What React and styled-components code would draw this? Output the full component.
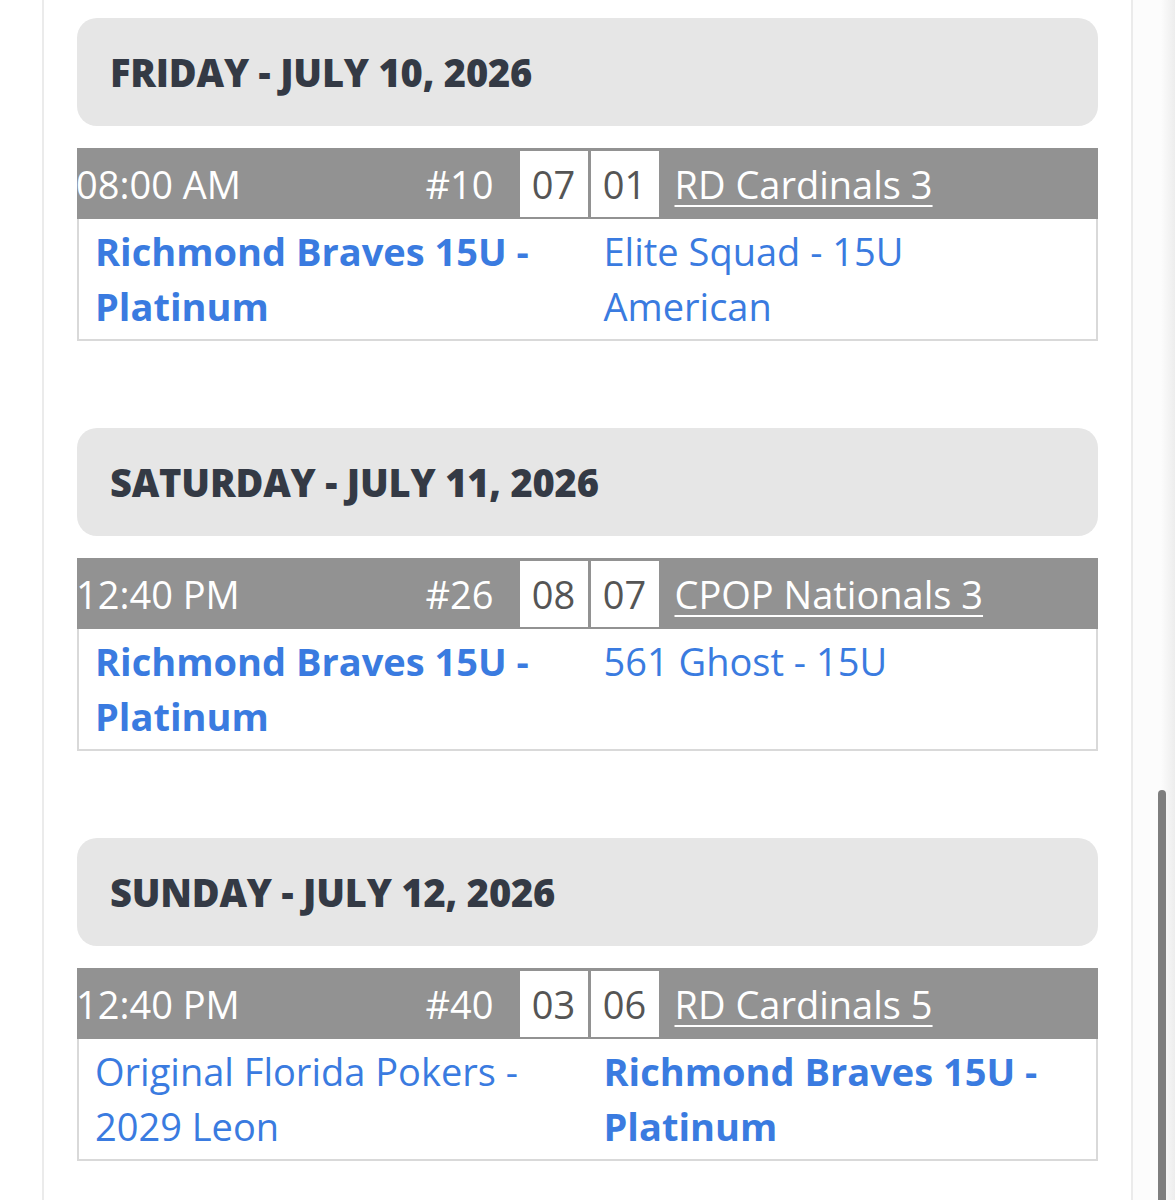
import React from 'react';
import styled, { createGlobalStyle } from 'styled-components';

const GlobalStyle = createGlobalStyle`
  html, body {
    margin: 0;
    padding: 0;
    background: #ffffff;
  }
  body {
    font-family: "Open Sans", "Liberation Sans", sans-serif;
  }
`;

const Page = styled.div`
  display: flex;
  width: 1175px;
  height: 1200px;
  overflow: hidden;
  padding-left: 42px;
  box-sizing: border-box;
`;

const Column = styled.main`
  width: 1091px;
  box-sizing: border-box;
  border-left: 2px solid #ebebeb;
  border-right: 2px solid #ebebeb;
  padding: 18px 33px 0;
  display: flex;
  flex-direction: column;
  gap: 87px;
`;

const ScrollTrack = styled.div`
  flex: 1;
  display: flex;
  justify-content: flex-end;
  padding-right: 9px;
  background: linear-gradient(to right, #fcfcfc 0, #fcfcfc 28px, #ededed 42px);
`;

const ScrollThumb = styled.div`
  width: 8px;
  margin-top: 790px;
  height: 600px;
  border-radius: 4px;
  background: #7e7e7e;
`;

const Day = styled.section`
  display: flex;
  flex-direction: column;
`;

const DayHeader = styled.h2`
  margin: 0 0 22px;
  height: 108px;
  display: flex;
  align-items: center;
  padding-left: 33px;
  border-radius: 20px;
  background: #e6e6e6;
  color: #343a45;
  font-size: 38px;
  font-weight: 800;
  letter-spacing: -0.2px;
`;

const Game = styled.div`
  display: flex;
  flex-direction: column;
`;

const GameBar = styled.div`
  height: 71px;
  display: flex;
  align-items: center;
  background: #929292;
  color: #ffffff;
  font-size: 38px;
  font-weight: 400;
`;

const GameHalf = styled.div`
  width: 50%;
  height: 100%;
  display: flex;
  align-items: center;
  box-sizing: border-box;
`;

const Time = styled.span`
  flex: 1;
  margin-left: -1px;
`;

const GameNo = styled.span`
  padding-right: 26px;
`;

const Score = styled.span`
  width: 68px;
  height: 66px;
  margin-top: 1px;
  display: flex;
  align-items: center;
  justify-content: center;
  background: #ffffff;
  color: #555555;
  margin-left: ${(p) => (p.$second ? '3px' : '0')};
`;

const Field = styled.a`
  color: #ffffff;
  text-decoration: underline;
  text-decoration-thickness: 2px;
  text-underline-offset: 6px;
  padding-left: 16px;
`;

const Teams = styled.div`
  display: grid;
  grid-template-columns: 1fr 1fr;
  border: 2px solid #d9d9d9;
  border-top: none;
  padding: 5px 0 5px;
`;

const Team = styled.a`
  padding: 0 18px 0 16px;
  color: #3a7be0;
  font-size: 38px;
  line-height: 55px;
  font-weight: ${(p) => (p.$mine ? 700 : 400)};
  text-decoration: none;
`;

const schedule = [
  {
    day: 'FRIDAY - JULY 10, 2026',
    time: '08:00 AM',
    no: '#10',
    scores: ['07', '01'],
    field: 'RD Cardinals 3',
    home: 'Richmond Braves 15U - Platinum',
    away: 'Elite Squad - 15U American',
    mine: 'home',
  },
  {
    day: 'SATURDAY - JULY 11, 2026',
    time: '12:40 PM',
    no: '#26',
    scores: ['08', '07'],
    field: 'CPOP Nationals 3',
    home: 'Richmond Braves 15U - Platinum',
    away: '561 Ghost - 15U',
    mine: 'home',
  },
  {
    day: 'SUNDAY - JULY 12, 2026',
    time: '12:40 PM',
    no: '#40',
    scores: ['03', '06'],
    field: 'RD Cardinals 5',
    home: 'Original Florida Pokers - 2029 Leon',
    away: 'Richmond Braves 15U - Platinum',
    mine: 'away',
  },
];

export default function App() {
  return (
    <>
      <GlobalStyle />
      <Page>
        <Column>
          {schedule.map((g) => (
            <Day key={g.day}>
              <DayHeader>{g.day}</DayHeader>
              <Game>
                <GameBar>
                  <GameHalf>
                    <Time>{g.time}</Time>
                    <GameNo>{g.no}</GameNo>
                    <Score>{g.scores[0]}</Score>
                  </GameHalf>
                  <GameHalf>
                    <Score $second>{g.scores[1]}</Score>
                    <Field href="#">{g.field}</Field>
                  </GameHalf>
                </GameBar>
                <Teams>
                  <Team href="#" $mine={g.mine === 'home'}>{g.home}</Team>
                  <Team href="#" $mine={g.mine === 'away'}>{g.away}</Team>
                </Teams>
              </Game>
            </Day>
          ))}
        </Column>
        <ScrollTrack>
          <ScrollThumb />
        </ScrollTrack>
      </Page>
    </>
  );
}
